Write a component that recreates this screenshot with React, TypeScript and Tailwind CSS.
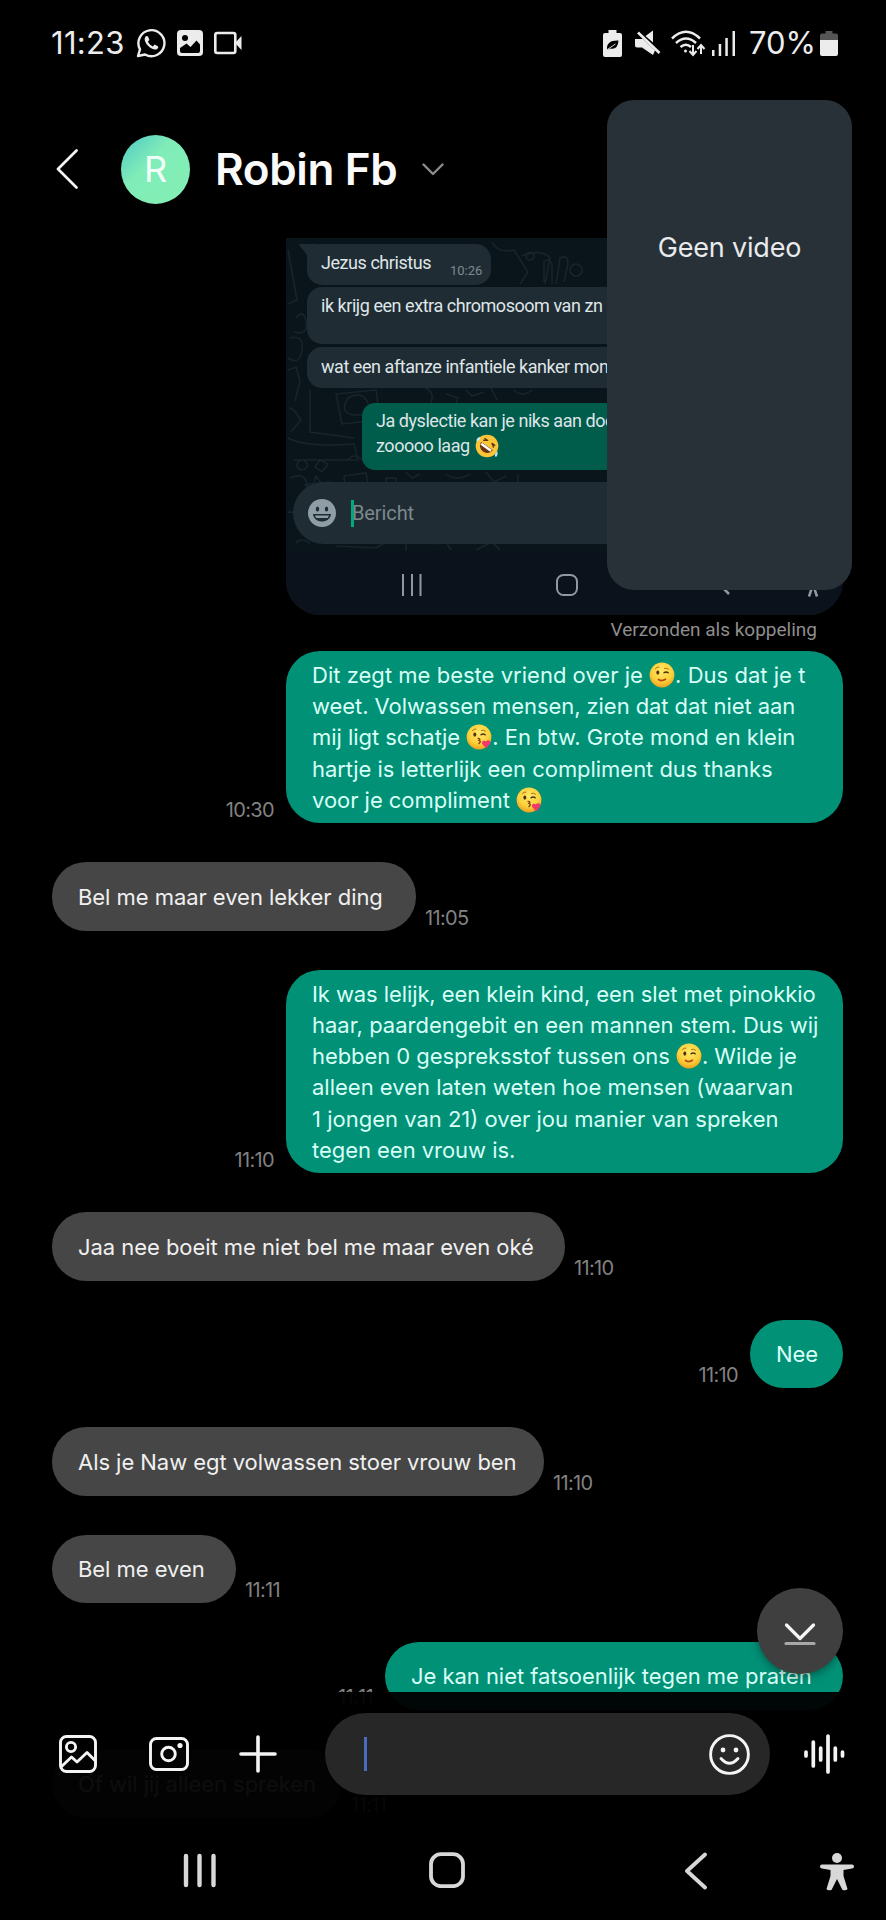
import React from "react";

type Segment = string | { emoji: "wink" | "kiss" };
type Line = { parts: Segment[]; tracking?: string };

function Emoji({ kind, className = "" }: { kind: "wink" | "kiss"; className?: string }) {
  return (
    <svg viewBox="0 0 26 26" className={`inline-block h-[26px] w-[26px] align-[-5px] ${className}`}>
      <defs>
        <radialGradient id={`face-${kind}`} cx="0.5" cy="0.35" r="0.65">
          <stop offset="0" stopColor="#ffe868" />
          <stop offset="0.65" stopColor="#fbd03a" />
          <stop offset="1" stopColor="#eda21d" />
        </radialGradient>
      </defs>
      <circle cx="13" cy="13" r="12.4" fill={`url(#face-${kind})`} />
      <ellipse cx="8.8" cy="10.6" rx="1.5" ry="2.1" fill="#4c3210" />
      <path d="M15 10.8q2-1.8 4.2 0" fill="none" stroke="#4c3210" strokeWidth="1.4" strokeLinecap="round" />
      <path d="M6.4 6.6q1.6-2 3.6-1.6M15.5 6.4q2.4-1 4 .8" fill="none" stroke="#a96f15" strokeWidth="1" strokeLinecap="round" />
      {kind === "wink" ? (
        <path d="M9.500 17.500q3.500 2.200 7-.2" fill="none" stroke="#b5461a" strokeWidth="1.700" strokeLinecap="round" />
      ) : (
        <>
          <path d="M12 14.400q3 .3 1 2 2.600.8 0 3.200" fill="none" stroke="#8b3c12" strokeWidth="1.4" strokeLinecap="round" />
          <path d="M20.400 24.500l-4-4.200c-1.600-2.600 1.600-4.800 3.400-2.700 1.500-2.300 5-1.500 4.600 1.300z" fill="#f0386b" />
        </>
      )}
    </svg>
  );
}

function Rofl() {
  return (
    <svg viewBox="0 0 24 24" className="ml-[5px] inline-block h-6 w-6 align-[-6px]">
      <circle cx="12" cy="12" r="11.300" fill="#fbc537" />
      <g transform="rotate(35 12 12)">
        <path d="M5 12h14c0 9-14 9-14 0z" fill="#6b3410" />
        <path d="M6 12.300h12v2.500H6z" fill="#fff" />
        <path d="M6 9.200l3.400-2.200M18 9.200l-3.400-2.200M6 7h3.400M18 7h-3.400" stroke="#5c3a12" strokeWidth="1.300" strokeLinecap="round" />
      </g>
      <path d="M1.500 7.500q-.5-4 3.500-4.500 1 3.500-3.500 4.500zM22.300 17q1 4-1.300 6-3-2 1.300-6z" fill="#bfe6f2" />
    </svg>
  );
}

const firstReply: Line[] = [
  { parts: ["Dit zegt me beste vriend over je ", { emoji: "wink" }, ". Dus dat je t"], tracking: "tracking-[0.020px]" },
  { parts: ["weet. Volwassen mensen, zien dat dat niet aan"], tracking: "tracking-[-0.070px]" },
  { parts: ["mij ligt schatje ", { emoji: "kiss" }, ". En btw. Grote mond en klein"] },
  { parts: ["hartje is letterlijk een compliment dus thanks"] },
  { parts: ["voor je compliment ", { emoji: "kiss" }] },
];

const secondReply: Line[] = [
  { parts: ["Ik was lelijk, een klein kind, een slet met pinokkio"], tracking: "tracking-[-0.090px]" },
  { parts: ["haar, paardengebit en een mannen stem. Dus wij"], tracking: "tracking-[0px]" },
  { parts: ["hebben 0 gespreksstof tussen ons ", { emoji: "wink" }, ". Wilde je"], tracking: "tracking-[-0.070px]" },
  { parts: ["alleen even laten weten hoe mensen (waarvan"], tracking: "tracking-[0px]" },
  { parts: ["1 jongen van 21) over jou manier van spreken"], tracking: "tracking-[0px]" },
  { parts: ["tegen een vrouw is."] },
];

function Time({ value }: { value: string }) {
  return <span className="pb-[1px] text-[20px] leading-6 tracking-[-0.650px] text-[#828282]">{value}</span>;
}

function Sent({ time, width, lines }: { time: string; width: string; lines: Line[] }) {
  const single = lines.length === 1;
  return (
    <div className="flex shrink-0 items-end justify-end gap-[12px] pr-[43px]">
      <Time value={time} />
      <div className={`${width} ${single ? "pt-[19.400px] pb-[17.800px]" : "pt-[9px] pb-[7.400px]"} rounded-[34px] bg-[#009177] pl-[26px] text-[#d9fff6]`}>
        {lines.map((line, i) => (
          <p key={i} className={`text-[22px] leading-[31.200px] whitespace-nowrap ${line.tracking ?? "tracking-[-0.040px]"}`}>
            {line.parts.map((part, j) => (typeof part === "string" ? part : <Emoji key={j} kind={part.emoji} />))}
          </p>
        ))}
      </div>
    </div>
  );
}

function Received({ time, width, text }: { time: string; width: string; text: string }) {
  return (
    <div className="flex shrink-0 items-end gap-[9px] pl-[52px]">
      <div className={`${width} rounded-[34px] bg-[#464646] pt-[19.400px] pb-[17.800px] pl-[26px] text-[22px] leading-[31.200px] tracking-[-0.050px] whitespace-nowrap text-[#f0f0f0]`}>
        {text}
      </div>
      <Time value={time} />
    </div>
  );
}

function StatusBar() {
  return (
    <header className="flex h-[86px] shrink-0 items-center pl-[51px] text-[#ececec]">
      <span className="w-[85px] text-[31px] tracking-[0.300px]">11:23</span>
      <svg viewBox="0 0 30 30" className="h-[30px] w-[30px]" fill="none">
        <path d="M2 28l2-6.600A13 13 0 1 1 9 26.500z" stroke="currentColor" strokeWidth="2.400" strokeLinejoin="round" />
        <path d="M10.300 8c-3 2-1.500 6.500 2 10s8 5 10 1.700l-.4-1.500-3.200-1.600-1.900 1.800c-2-.8-4-2.700-4.900-4.800l1.500-1.700-1.300-3.500z" fill="currentColor" />
      </svg>
      <svg viewBox="0 0 26 26" className="ml-[11px] h-[26px] w-[26px]">
        <rect width="26" height="26" rx="4" fill="currentColor" />
        <circle cx="8" cy="8" r="3" fill="#000" />
        <path d="M3 18l6.500-4.500 4 3.500 6-6.500 3.500 4V21q0 2-2 2H5q-2 0-2-2z" fill="#000" />
      </svg>
      <svg viewBox="0 0 28 24" className="ml-[11px] h-6 w-7">
        <rect x="1.300" y="2" width="20" height="20" rx="2" fill="none" stroke="currentColor" strokeWidth="2.600" />
        <path d="M21 12l6.500-7v14z" fill="currentColor" />
      </svg>
      <svg viewBox="0 0 19 27" className="ml-[361px] h-[27px] w-[19px]">
        <path d="M5.500 0h8v3H17q2 0 2 2v20q0 2-2 2H2q-2 0-2-2V5q0-2 2-2h3.500z" fill="currentColor" />
        <path d="M4 20q-1-10 11.500-9.500Q15 20 7 18.500M3 20.500l8-6" fill="#000" />
        <path d="M3.500 20l9-6" stroke="#ececec" strokeWidth="0.900" />
      </svg>
      <svg viewBox="0 0 26 26" className="ml-[13px] h-[26px] w-[26px]" fill="currentColor">
        <path d="M10.500 6L18 0.500V12.500z" />
        <path d="M0 9h8l12 11.500-2 4.500L7 17.500H2q-2 0-2-2z" />
        <path d="M3 2.500L24.500 23" stroke="currentColor" strokeWidth="2.600" />
      </svg>
      <svg viewBox="0 0 35 27" className="ml-[10px] h-[27px] w-[35px]" fill="none" stroke="currentColor" strokeWidth="2.500">
        <path d="M1 8.500Q15 -5 29 8.500M5 13q10-9 20 0M9.500 17q5.500-4.500 10.500 0" />
        <circle cx="14.500" cy="21" r="1.500" fill="currentColor" stroke="none" />
        <path d="M22 15v9M18.500 21l3.500 4 3.500-4M30 24v-8M26.500 19l3.500-4 3.500 4" strokeWidth="2" />
      </svg>
      <svg viewBox="0 0 24 25" className="ml-[6px] h-[25px] w-6" fill="currentColor">
        <path d="M0 19h2.500v6H0zM6.700 13h2.500v12H6.700zM13.300 7h2.500v18h-2.500zM20.500 0H23v25h-2.500z" />
      </svg>
      <span className="ml-[13px] w-[71px] text-[31px] tracking-[0px]">70%</span>
      <svg viewBox="0 0 18 25" className="h-[25px] w-[18px]">
        <path d="M5.500 0h7v2.500H16q2 0 2 2V10H0V4.500q0-2 2-2h3.500z" fill="#555" />
        <path d="M0 9h18v14q0 2-2 2H2q-2 0-2-2z" fill="currentColor" />
      </svg>
    </header>
  );
}

function ContactHeader() {
  return (
    <div className="flex h-[152px] shrink-0 items-center pt-[14px] pl-[56px]">
      <svg viewBox="0 0 22 40" className="h-10 w-[22px]" fill="none" stroke="#f4f4f4" strokeWidth="2.700" strokeLinecap="round" strokeLinejoin="round">
        <path d="M20.500 1.500L2 20l18.500 18.500" />
      </svg>
      <div className="ml-[43px] flex h-[69px] w-[69px] items-center justify-center rounded-full bg-linear-135 from-[#5fd5c0] from-15% via-[#80ecb8] via-40% to-[#84f0b4] text-[36px] text-[#f0fff8]">
        R
      </div>
      <h1 className="ml-[25px] w-[207px] text-[44px] font-semibold tracking-[-0.350px] whitespace-nowrap text-[#fafafa]">Robin Fb</h1>
      <svg viewBox="0 0 22 13" className="h-[13px] w-[22px]" fill="none" stroke="#8c8c8c" strokeWidth="2.400" strokeLinecap="round" strokeLinejoin="round">
        <path d="M1.500 1.500L11 11l9.500-9.500" />
      </svg>
    </div>
  );
}

function Doodles() {
  return (
    <svg viewBox="0 0 557 313" className="absolute inset-x-0 top-0 h-[313px] w-[557px]" fill="none" stroke="#17242b" strokeWidth="1.600">
      <path d="M2 12l9 50-9 4M10 80q8-10 10 4t-12 10M4 100q14-4 12 12T2 120M2 132l8-3 4 14-5 20M3 170l5 2 7 10-10 12M24 152v42l44 6M50 156l40-4 4 30-38 4zM62 160q14-8 20 5t-12 12-8-17M2 200q20 10 66 6l4 16H8M16 222a5 5 0 1 0 .1 0M34 222l8 4-6 8-7-5zM30 238l5 7 8-1-5 7 3 8-8-3-7 5v-9l-7-5 9-2zM58 238l22-3 4 22-24 2zM4 240q18-8 18 14T2 274M62 222q6-8 14 0M100 240h10v14h-10z" />
      <path d="M206 4q6 12 22 8l14 22-8 12M236 18q20-8 28 2l-5 26M258 44V24q6-6 8 4v18M270 46l4-26q8-4 8 6l-4 18M290 26a6 6 0 1 0 .1 0M244 14a4 4 0 1 0 .1 0M140 150q10 6 4 16M160 156l12 4-4 12M180 152l6 6 12-4M205 150l6 12M228 152q8 8 18 0" />
      <path d="M120 234l6 6 8-4M160 236q10 8 24 0M200 234l8 10 12-6M232 236v10h14M10 305q4-6 14 0M50 308l40 2 10-6M150 306l10-2 5 8M190 312l16-8 8 8M120 305v8" />
    </svg>
  );
}

function SharedScreenshot() {
  return (
    <figure className="relative ml-[286px] flex h-[377px] w-[557px] shrink-0 flex-col overflow-hidden rounded-b-[34px] bg-[#0a141b] font-['Roboto',sans-serif] text-[18px] tracking-[-0.450px] whitespace-nowrap text-[#dfe5e8]">
      <Doodles />
      <div className="relative flex flex-col items-start pt-[6px] pl-[21px]">
        <svg viewBox="0 0 20 16" className="absolute top-[6px] left-[12px] h-4 w-5">
          <path d="M1 0h19v16h-9Q9 10 1 1z" fill="#1f2c33" />
        </svg>
        <div className="relative flex h-[41px] w-[184px] rounded-[15px] bg-[#1f2c33] pl-[14px] leading-[38px]">
          <span className="w-[129px]">Jezus christus</span>
          <span className="pt-[8px] text-[13px] tracking-[0px] text-[#7f8a90]">10:26</span>
        </div>
        <div className="mt-[2px] h-[57px] w-[520px] rounded-[15px] bg-[#1f2c33] pl-[14px] leading-[38px]">
          ik krijg een extra chromosoom van zn
        </div>
        <div className="mt-[3px] h-[41px] w-[520px] rounded-[15px] bg-[#1f2c33] pl-[14px] leading-[40px]">
          wat een aftanze infantiele kanker mond
        </div>
        <div className="mt-[15px] ml-[55px] h-[67px] w-[465px] rounded-[13px] bg-[#005d4b] pt-[5px] pl-[14px] leading-[25px]">
          <p>Ja dyslectie kan je niks aan doen</p>
          <p>
            zooooo laag
            <Rofl />
          </p>
        </div>
      </div>
      <div className="relative mt-[12px] ml-[7px] flex h-[62px] w-[470px] items-center rounded-full bg-[#1f2c33] pl-[15px]">
        <svg viewBox="0 0 28 28" className="h-7 w-7">
          <circle cx="14" cy="14" r="14" fill="#8f9da6" />
          <ellipse cx="9.500" cy="10" rx="1.700" ry="2.500" fill="#1f2c33" />
          <ellipse cx="18.500" cy="10" rx="1.700" ry="2.500" fill="#1f2c33" />
          <path d="M5 15h18c-1 10-17 10-18 0z" fill="#1f2c33" />
          <path d="M7 16.500h14l-1.200 2.500H8.200z" fill="#8f9da6" />
        </svg>
        <span className="ml-[15px] h-[27px] w-[3px] bg-[#00a982]" />
        <span className="-ml-[2px] text-[20px] tracking-[-0.100px] text-[#7d888e]">Bericht</span>
      </div>
      <div className="relative mt-auto flex h-[64px] bg-[#0b121b] pt-[23px] text-[#9098a0]">
        <svg viewBox="0 0 22 22" className="ml-[115px] h-[22px] w-[22px]" stroke="currentColor" strokeWidth="2">
          <path d="M2 0v22M11 0v22M19.500 0v22" />
        </svg>
        <svg viewBox="0 0 22 22" className="ml-[133px] h-[22px] w-[22px]" fill="none" stroke="currentColor" strokeWidth="2">
          <rect x="1" y="1" width="20" height="20" rx="6.500" />
        </svg>
        <svg viewBox="0 0 14 22" className="ml-[139px] h-[22px] w-[14px]" fill="none" stroke="currentColor" strokeWidth="2.500">
          <path d="M12 0L2 10l10 10" />
        </svg>
        <svg viewBox="0 0 22 23" className="ml-[71px] h-[23px] w-[22px]" fill="none" stroke="currentColor" strokeWidth="2.500">
          <path d="M1 8h20M9.500 10v5l-2.500 7.500M12.500 10v5l2.500 7.500" />
        </svg>
      </div>
    </figure>
  );
}

function Composer() {
  return (
    <div className="absolute inset-x-0 bottom-0 flex h-[228px] flex-col bg-black/95 pt-[21px]">
      <div className="flex h-[82px] items-center pl-[59px] text-[#f4f4f4]">
        <svg viewBox="0 0 38 38" className="h-[38px] w-[38px]" fill="none" stroke="currentColor" strokeWidth="2.900" strokeLinejoin="round">
          <rect x="1.500" y="1.500" width="35" height="35" rx="6" />
          <circle cx="12" cy="12" r="4.600" />
          <path d="M2 32l10.500-10 5.500 5 10-9.500 8.500 8.500" />
        </svg>
        <svg viewBox="0 0 40 34" className="ml-[52px] h-[34px] w-10" fill="none" stroke="currentColor" strokeWidth="2.900">
          <rect x="1.500" y="1.500" width="37" height="31" rx="6" />
          <circle cx="19.500" cy="17" r="6.800" />
          <circle cx="31" cy="8.500" r="2.600" fill="currentColor" stroke="none" />
        </svg>
        <svg viewBox="0 0 38 38" className="ml-[50px] h-[38px] w-[38px]" stroke="currentColor" strokeWidth="3.600" strokeLinecap="round">
          <path d="M19 2v34M2 19h34" />
        </svg>
        <div className="ml-[48px] flex h-[82px] w-[445px] items-center rounded-full bg-[#272727] pr-[20px] pl-[39px]">
          <span className="h-[34px] w-[3px] bg-[#4a6cc0]" />
          <svg viewBox="0 0 41 41" className="ml-auto h-[41px] w-[41px]" fill="none" stroke="currentColor" strokeWidth="2.900" strokeLinecap="round">
            <circle cx="20.500" cy="20.500" r="18.900" />
            <path d="M12 24.500q8.500 9.500 17 0" />
            <circle cx="14" cy="16" r="2.400" fill="currentColor" stroke="none" />
            <circle cx="27" cy="16" r="2.400" fill="currentColor" stroke="none" />
          </svg>
        </div>
        <svg viewBox="0 0 42 40" className="ml-[34px] h-10 w-[42px]" stroke="currentColor" strokeWidth="3.700" strokeLinecap="round">
          <path d="M2 18v4M9.300 8v24M16.700 14v12M24 2v36M31.300 14v12M38.500 18v4" />
        </svg>
      </div>
      <nav className="mt-[57px] flex h-[40px] items-start pl-[183px] text-[#d8d8d8]">
        <svg viewBox="0 0 34 36" className="h-9 w-[34px]" stroke="currentColor" strokeWidth="4.400" strokeLinecap="round">
          <path d="M3 4v29M16.500 4v29M30.500 4v29" />
        </svg>
        <svg viewBox="0 0 36 36" className="ml-[212px] h-9 w-9" fill="none" stroke="currentColor" strokeWidth="3.800">
          <rect x="2" y="2.200" width="32" height="32" rx="10" />
        </svg>
        <svg viewBox="0 0 24 38" className="ml-[219px] h-[38px] w-6" fill="none" stroke="currentColor" strokeWidth="3.800" strokeLinecap="round" strokeLinejoin="round">
          <path d="M21 2.500L3 19l18 16.500" />
        </svg>
        <svg viewBox="0 0 34 38" className="mt-[1px] ml-[112px] h-[38px] w-[34px]" fill="currentColor">
          <circle cx="17" cy="5" r="5" />
          <path d="M2 11.500h30q2 0 2 2t-2 2l-8.500 1.500v6l4 13q-1 2-5 1l-5.500-11-5.500 11q-4 1-5-1l4-13v-6L2 15.500q-2 0-2-2t2-2z" />
        </svg>
      </nav>
    </div>
  );
}

export default function App() {
  return (
    <div className="relative flex h-[1920px] w-[886px] flex-col overflow-hidden bg-black font-['Inter',sans-serif]">
      <StatusBar />
      <ContactHeader />
      <main className="flex min-h-0 flex-1 flex-col overflow-hidden">
        <SharedScreenshot />
        <p className="h-[36px] shrink-0 pr-[69px] text-right font-['Roboto',sans-serif] text-[19px] leading-[30px] text-[#8e8e8e]">Verzonden als koppeling</p>
        <div className="flex flex-col gap-[39px]">
          <Sent time="10:30" width="w-[557px]" lines={firstReply} />
          <Received time="11:05" width="w-[364px]" text="Bel me maar even lekker ding" />
          <Sent time="11:10" width="w-[557px]" lines={secondReply} />
          <Received time="11:10" width="w-[513px]" text="Jaa nee boeit me niet bel me maar even oké" />
          <Sent time="11:10" width="w-[93px]" lines={[{ parts: ["Nee"] }]} />
          <Received time="11:10" width="w-[492px]" text="Als je Naw egt volwassen stoer vrouw ben" />
          <Received time="11:11" width="w-[184px]" text="Bel me even" />
          <Sent time="11:11" width="w-[458px]" lines={[{ parts: ["Je kan niet fatsoenlijk tegen me praten"] }]} />
          <Received time="11:11" width="w-[290px]" text="Of wil jij alleen spreken" />
        </div>
      </main>
      <div className="absolute top-[1588px] left-[757px] flex h-[86px] w-[86px] items-center justify-center rounded-full bg-[#3f3f3f] shadow-[0_3px_8px_rgba(0,0,0,0.350)]">
        <svg viewBox="0 0 32 24" className="mt-[6px] h-6 w-8" fill="none" strokeWidth="3.200" strokeLinecap="round" strokeLinejoin="round">
          <path d="M2 21.500h28" stroke="#a8a8a8" />
          <path d="M2.500 3L16 16.500 29.500 3" stroke="#f6f6f6" />
        </svg>
      </div>
      <Composer />
      <aside className="absolute top-[100px] left-[607px] flex h-[490px] w-[245px] items-start justify-center rounded-[27px] bg-[#283138] pt-[130px] text-[27px] leading-9 tracking-[-0.200px] text-[#e8eaec]">
        Geen video
      </aside>
    </div>
  );
}
